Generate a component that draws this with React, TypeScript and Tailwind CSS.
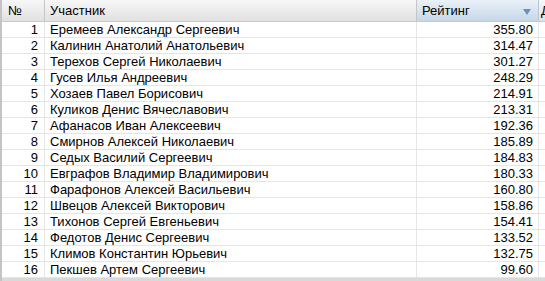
const rows: [string, string][] = [
  ["Еремеев Александр Сергеевич", "355.80"],
  ["Калинин Анатолий Анатольевич", "314.47"],
  ["Терехов Сергей Николаевич", "301.27"],
  ["Гусев Илья Андреевич", "248.29"],
  ["Хозаев Павел Борисович", "214.91"],
  ["Куликов Денис Вячеславович", "213.31"],
  ["Афанасов Иван Алексеевич", "192.36"],
  ["Смирнов Алексей Николаевич", "185.89"],
  ["Седых Василий Сергеевич", "184.83"],
  ["Евграфов Владимир Владимирович", "180.33"],
  ["Фарафонов Алексей Васильевич", "160.80"],
  ["Швецов Алексей Викторович", "158.86"],
  ["Тихонов Сергей Евгеньевич", "154.41"],
  ["Федотов Денис Сергеевич", "133.52"],
  ["Климов Константин Юрьевич", "132.75"],
  ["Пекшев Артем Сергеевич", "99.60"],
];

const cols = "grid grid-cols-[43px_372px_122px_1fr]";

export default function App() {
  return (
    <div
      className="w-[545px] h-[281px] overflow-hidden bg-white border-l-2 border-[#c4c4c4] text-[13px] text-black"
      style={{ fontFamily: '"Liberation Sans", Arial, sans-serif' }}
    >
      <div className={`${cols} h-[22px] border-b border-[#c9c9c9] leading-[21px]`}>
        <div className="bg-gradient-to-b from-[#f7f7f7] to-[#e1e1e1] border-r border-[#c6c6c6] pl-[6px]">№</div>
        <div className="bg-gradient-to-b from-[#f7f7f7] to-[#e1e1e1] border-r border-[#c6c6c6] pl-[5px]">Участник</div>
        <div className="flex items-center justify-between bg-gradient-to-b from-[#eaf1f8] to-[#c6d7e8] border-r border-[#b7c6d6] pl-[5px] pr-[7px]">
          <span>Рейтинг</span>
          <svg width="8" height="6" viewBox="0 0 8 6" className="mt-[2px]">
            <path d="M0 0H8L4 6Z" fill="#6f90b3" />
          </svg>
        </div>
        <div className="bg-gradient-to-b from-[#f7f7f7] to-[#e1e1e1] pl-[2px] overflow-hidden">Д</div>
      </div>
      {rows.map(([name, score], i) => (
        <div key={i} className={`${cols} h-[16px] border-b border-[#e5e5e5] leading-[15px]`}>
          <div className="text-right pr-[6px] border-r border-[#e5e5e5]">{i + 1}</div>
          <div className="pl-[5px] border-r border-[#e5e5e5] whitespace-nowrap">{name}</div>
          <div className="text-right pr-[5px] border-r border-[#e5e5e5]">{score}</div>
          <div />
        </div>
      ))}
      <div className="h-[10px] bg-[#d9d9d9]" />
    </div>
  );
}
